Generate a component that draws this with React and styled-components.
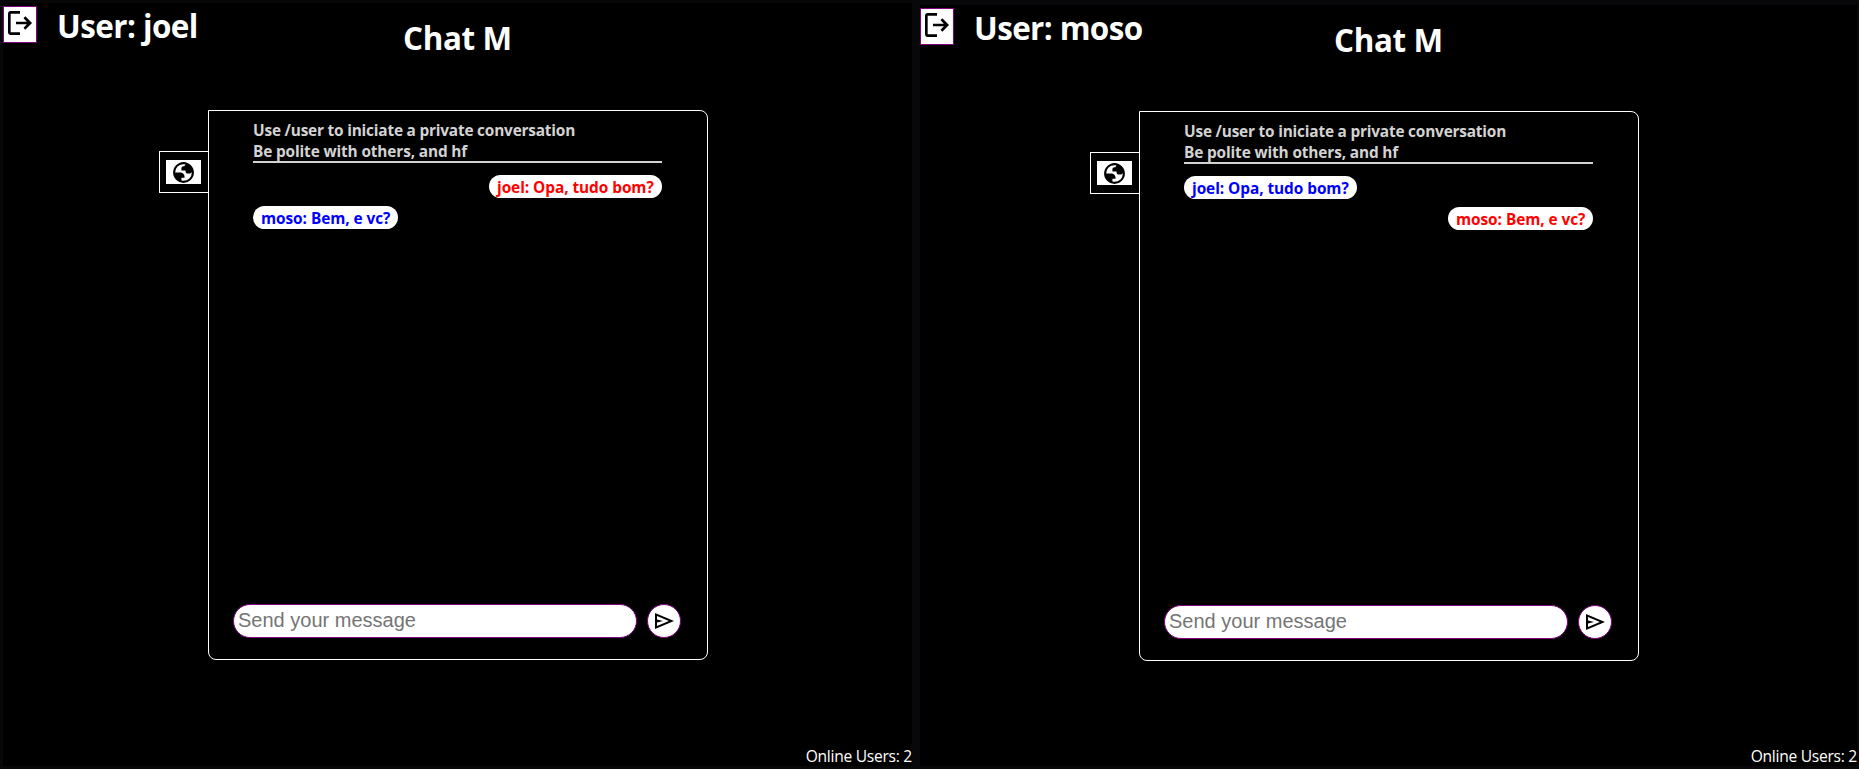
import React from 'react';
import styled, { createGlobalStyle } from 'styled-components';

const GlobalStyle = createGlobalStyle`
  * { box-sizing: border-box; }
  body { margin: 0; background: #08080a; }
`;

const Screen = styled.div`
  display: flex;
  align-items: flex-start;
  gap: 8px;
  width: 1859px;
  height: 769px;
  padding: 3px 2px 3px 3px;
  font-family: 'Segoe UI', 'Open Sans', sans-serif;
  color: #fff;
`;

const Pane = styled.section`
  display: flex;
  flex-direction: column;
  width: ${(p) => p.$width}px;
  height: ${(p) => p.$height}px;
  margin-top: ${(p) => p.$top}px;
  padding-top: 3px;
  background: #000;
`;

const TopBar = styled.header`
  display: flex;
  align-items: flex-start;
  height: ${(p) => p.$height}px;
`;

const LogoutButton = styled.button`
  display: flex;
  justify-content: center;
  width: 34px;
  height: 37px;
  padding: 0;
  border: 1px solid purple;
  background: #fff;
`;

const UserName = styled.h1`
  width: ${(p) => p.$width}px;
  margin: -2px 0 0 20px;
  font-size: 31.4px;
  line-height: 43px;
  letter-spacing: ${(p) => p.$spacing}px;
  white-space: nowrap;
`;

const Title = styled.h1`
  margin: 10px 0 0;
  font-size: 31.4px;
  line-height: 43px;
  letter-spacing: -0.35px;
  white-space: nowrap;
`;

const ChatRow = styled.div`
  display: flex;
  align-items: flex-start;
  margin-left: ${(p) => p.$left}px;
`;

const RoomTab = styled.div`
  display: flex;
  align-items: center;
  justify-content: center;
  width: 49px;
  height: 42px;
  margin-top: 41px;
  padding-right: 1px;
  border: 1px solid #fff;
  border-right: 0;
`;

const RoomIcon = styled.div`
  display: flex;
  align-items: center;
  justify-content: center;
  width: 35px;
  height: 24px;
  background: #fff;
`;

const Card = styled.main`
  display: flex;
  flex-direction: column;
  width: 500px;
  height: 550px;
  padding: 9px 26px 21px 24px;
  border: 1px solid #fff;
  border-radius: 0 8px 8px 8px;
`;

const Messages = styled.div`
  display: flex;
  flex: 1;
  flex-direction: column;
  margin: 0 19px 0 20px;
`;

const Rules = styled.div`
  height: 43px;
  margin-bottom: 12px;
  border-bottom: 2px solid #d3d3d3;
  color: #d3d3d3;
  font-size: 15.4px;
  font-weight: 700;
  line-height: 21px;
  white-space: nowrap;
`;

const Rule = styled.div`
  letter-spacing: ${(p) => p.$spacing}px;
`;

const Bubble = styled.div`
  align-self: ${(p) => (p.$mine ? 'flex-end' : 'flex-start')};
  width: ${(p) => p.$width}px;
  height: 23px;
  margin-bottom: 8px;
  padding-left: 8px;
  border-radius: 12px;
  background: #fff;
  color: ${(p) => (p.$mine ? 'red' : 'blue')};
  font-size: 15.4px;
  font-weight: 700;
  line-height: 26px;
  letter-spacing: -0.06px;
  white-space: nowrap;
`;

const Composer = styled.form`
  display: flex;
  gap: 10px;
`;

const MessageInput = styled.input`
  width: 404px;
  height: 34px;
  padding: 0 4px 1px;
  border: 1px solid purple;
  border-radius: 17px;
  background: #fff;
  font: 20px 'Liberation Sans', sans-serif;
  &::placeholder { color: #757575; opacity: 1; }
`;

const SendButton = styled.button`
  display: flex;
  align-items: center;
  justify-content: center;
  width: 34px;
  height: 34px;
  padding: 0;
  border: 1px solid purple;
  border-radius: 50%;
  background: #fff;
`;

const Online = styled.footer`
  margin-top: auto;
  align-self: flex-end;
  font-size: 15.6px;
  line-height: 20px;
  letter-spacing: -0.27px;
  white-space: nowrap;
`;

const Symbol = ({ size, d }) => (
  <svg width={size} height={size} viewBox="0 -960 960 960" fill="#000">
    <path d={d} />
  </svg>
);

const LOGOUT =
  'M200-120q-33 0-56.5-23.5T120-200v-560q0-33 23.5-56.5T200-840h280v80H200v560h280v80H200Zm440-160-55-58 102-102H360v-80h327L585-622l55-58 200 200-200 200Z';
const SEND =
  'M120-160v-640l760 320-760 320Zm80-120 474-200-474-200v140l240 60-240 60v140Z';
const GLOBE =
  'M480-80q-83 0-156-31.5T197-197q-54-54-85.5-127T80-480q0-83 31.5-156T197-763q54-54 127-85.5T480-880q83 0 156 31.5T763-763q54 54 85.5 127T880-480q0 83-31.5 156T763-197q-54 54-127 85.5T480-80Zm0-80q134 0 227-93t93-227q0-7-.5-14.5T799-507q-5 29-27 48t-52 19h-80q-33 0-56.5-23.5T560-520v-40H400v-80q0-33 23.5-56.5T480-720h40q0-23 12.5-40.5T563-789q-20-5-40.5-8t-42.5-3q-134 0-227 93t-93 227h200q66 0 113 47t47 113v40H400v110q20 5 39.5 7.5T480-160Z';

const messages = [
  { from: 'joel', text: 'Opa, tudo bom?', width: 173 },
  { from: 'moso', text: 'Bem, e vc?', width: 145 },
];

function Chat({ user, width, height, top, barHeight, nameWidth, nameSpacing, left }) {
  return (
    <Pane $width={width} $height={height} $top={top}>
      <TopBar $height={barHeight}>
        <LogoutButton aria-label="Logout">
          <Symbol size={32} d={LOGOUT} />
        </LogoutButton>
        <UserName $width={nameWidth} $spacing={nameSpacing}>User: {user}</UserName>
        <Title>Chat M</Title>
      </TopBar>
      <ChatRow $left={left}>
        <RoomTab>
          <RoomIcon>
            <Symbol size={25} d={GLOBE} />
          </RoomIcon>
        </RoomTab>
        <Card>
          <Messages>
            <Rules>
              <Rule $spacing={-0.2}>Use /user to iniciate a private conversation</Rule>
              <Rule $spacing={-0.14}>Be polite with others, and hf</Rule>
            </Rules>
            {messages.map((m) => (
              <Bubble key={m.from} $mine={m.from === user} $width={m.width}>
                {m.from}: {m.text}
              </Bubble>
            ))}
          </Messages>
          <Composer>
            <MessageInput placeholder="Send your message" />
            <SendButton type="button" aria-label="Send">
              <Symbol size={24} d={SEND} />
            </SendButton>
          </Composer>
        </Card>
      </ChatRow>
      <Online>Online Users: 2</Online>
    </Pane>
  );
}

export default function App() {
  return (
    <>
      <GlobalStyle />
      <Screen>
        <Chat user="joel" width={909} height={763} top={0} barHeight={104} nameWidth={346} nameSpacing={-0.55} left={156} />
        <Chat user="moso" width={937} height={761} top={2} barHeight={103} nameWidth={360} nameSpacing={-0.6} left={170} />
      </Screen>
    </>
  );
}
